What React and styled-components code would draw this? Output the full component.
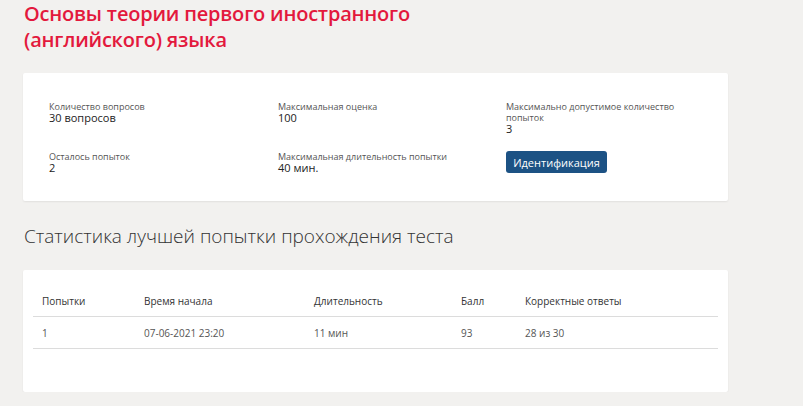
import React from "react";
import styled, { createGlobalStyle } from "styled-components";

const GlobalStyle = createGlobalStyle`
  html, body {
    margin: 0;
    padding: 0;
    background: #f2f1ef;
  }
  body {
    font-family: "Open Sans", "Noto Sans", sans-serif;
    color: #333;
  }
`;

const info = [
  { label: "Количество вопросов", value: "30 вопросов" },
  { label: "Максимальная оценка", value: "100" },
  { label: "Максимально допустимое количество попыток", value: "3" },
  { label: "Осталось попыток", value: "2" },
  { label: "Максимальная длительность попытки", value: "40 мин." },
];

const columns = [
  { title: "Попытки", width: 102 },
  { title: "Время начала", width: 170 },
  { title: "Длительность", width: 147 },
  { title: "Балл", width: 64 },
  { title: "Корректные ответы" },
];

const rows = [["1", "07-06-2021 23:20", "11 мин", "93", "28 из 30"]];

const App = () => {
  return (
    <Page>
      <GlobalStyle />
      <Title>
        Основы теории первого иностранного
        <br />
        (английского) языка
      </Title>

      <InfoCard>
        <InfoGrid>
          {info.map((item) => (
            <InfoItem key={item.label}>
              <InfoLabel>{item.label}</InfoLabel>
              <InfoValue>{item.value}</InfoValue>
            </InfoItem>
          ))}
          <InfoItem>
            <Button>Идентификация</Button>
          </InfoItem>
        </InfoGrid>
      </InfoCard>

      <SectionTitle>Статистика лучшей попытки прохождения теста</SectionTitle>

      <TableCard>
        <Table>
          <colgroup>
            {columns.map((c) => (
              <Col key={c.title} $width={c.width} />
            ))}
          </colgroup>
          <thead>
            <tr>
              {columns.map((c) => (
                <Th key={c.title}>{c.title}</Th>
              ))}
            </tr>
          </thead>
          <tbody>
            {rows.map((r, i) => (
              <tr key={i}>
                {r.map((cell, j) => (
                  <Td key={j}>{cell}</Td>
                ))}
              </tr>
            ))}
          </tbody>
        </Table>
      </TableCard>
    </Page>
  );
};

export default App;

const Page = styled.div`
  width: 705px;
  padding: 0 0 0 23px;
`;

const Title = styled.h1`
  margin: 0;
  padding: 1px 0 0 1px;
  font-family: "Open Sans", sans-serif;
  font-weight: 600;
  font-size: 20px;
  line-height: 26px;
  color: #e3193d;
  letter-spacing: -0.2px;
`;

const InfoCard = styled.div`
  margin-top: 20px;
  background: #fff;
  border-radius: 2px;
  box-shadow: 0 1px 2px rgba(0, 0, 0, 0.07);
  padding: 28px 40px 27px 26px;
`;

const InfoGrid = styled.div`
  display: grid;
  grid-template-columns: 229px 228px 1fr;
  row-gap: 16px;
  align-items: start;
`;

const InfoItem = styled.div`
  display: flex;
  flex-direction: column;
`;

const InfoLabel = styled.div`
  font-size: 9px;
  line-height: 11px;
  color: #555;
  max-width: 182px;
`;

const InfoValue = styled.div`
  font-size: 11px;
  line-height: 12px;
  color: #222;
`;

const Button = styled.button`
  align-self: flex-start;
  height: 22px;
  width: 101px;
  padding: 0;
  border: none;
  border-radius: 3px;
  background: #1c5284;
  color: #fff;
  font-family: "Open Sans", sans-serif;
  font-size: 11px;
  cursor: pointer;
`;

const SectionTitle = styled.h2`
  margin: 22px 0 0 1px;
  font-family: "Open Sans", sans-serif;
  font-weight: 300;
  font-size: 19px;
  line-height: 26px;
  color: #333;
`;

const TableCard = styled.div`
  margin-top: 21px;
  background: #fff;
  border-radius: 2px;
  box-shadow: 0 1px 2px rgba(0, 0, 0, 0.07);
  padding: 15px 10px 43px 10px;
`;

const Table = styled.table`
  width: 100%;
  table-layout: fixed;
  border-collapse: collapse;
  font-size: 10px;
`;

const Col = styled.col`
  width: ${(p) => (p.$width ? `${p.$width}px` : "auto")};
`;

const Th = styled.th`
  text-align: left;
  font-weight: 400;
  color: #333;
  height: 31px;
  padding: 0 0 0 9px;
  border-bottom: 1px solid #dcdcdc;
`;

const Td = styled.td`
  color: #555;
  height: 31px;
  padding: 0 0 0 9px;
  border-bottom: 1px solid #dcdcdc;
`;
